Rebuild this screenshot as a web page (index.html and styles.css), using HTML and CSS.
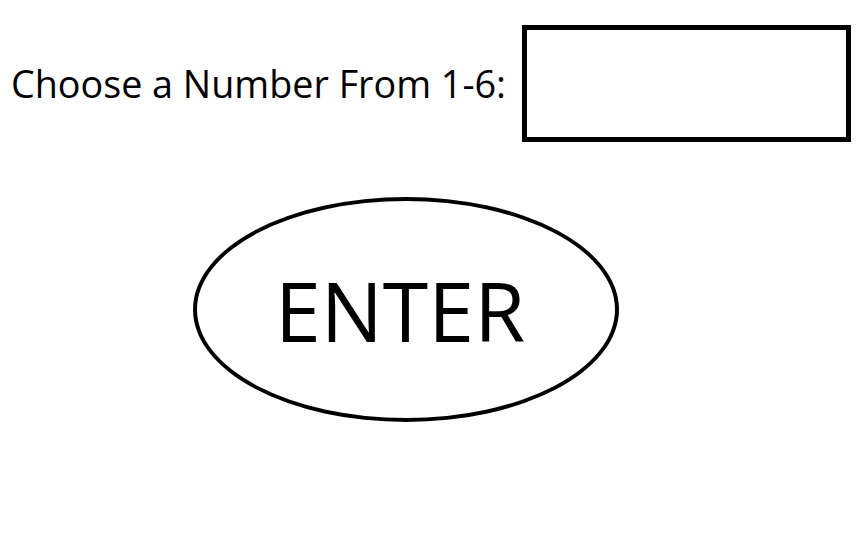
FILE: index.html
```html
<!DOCTYPE html>
<html lang="en">
<head>
  <meta charset="UTF-8" />
  <title>Dice Guess</title>
  <link rel="stylesheet" href="styles.css">
</head>
<body>
  <div class="pick-row">
    <label class="pick-label" for="guess">Choose a Number From 1-6:</label>
    <input class="pick-box" id="guess" type="text" />
  </div>

  <button class="enter-button">ENTER</button>
</body>
</html>
```

FILE: styles.css
```css
body {
  margin: 0;
  background-color: #fff;
  color: #000;
  font-family: 'Open Sans', 'Liberation Sans', sans-serif;
}

.pick-row {
  display: flex;
  align-items: center;
  padding: 25px 0 0 11px;
  gap: 16px;
}

.pick-label {
  font-size: 37.7px;
  line-height: 1;
}

.pick-box {
  box-sizing: border-box;
  width: 329px;
  height: 117px;
  border: 5px solid #000;
  background: #fff;
  outline: none;
  font-family: inherit;
  font-size: 30px;
}

.enter-button {
  display: block;
  box-sizing: border-box;
  width: 426px;
  height: 225px;
  margin: 55px 0 0 193px;
  border: 4px solid #000;
  border-radius: 50%;
  background: #fff;
  color: #000;
  font-family: inherit;
  font-size: 82.5px;
  padding: 0 12px 0 0;
  cursor: pointer;
}
```
